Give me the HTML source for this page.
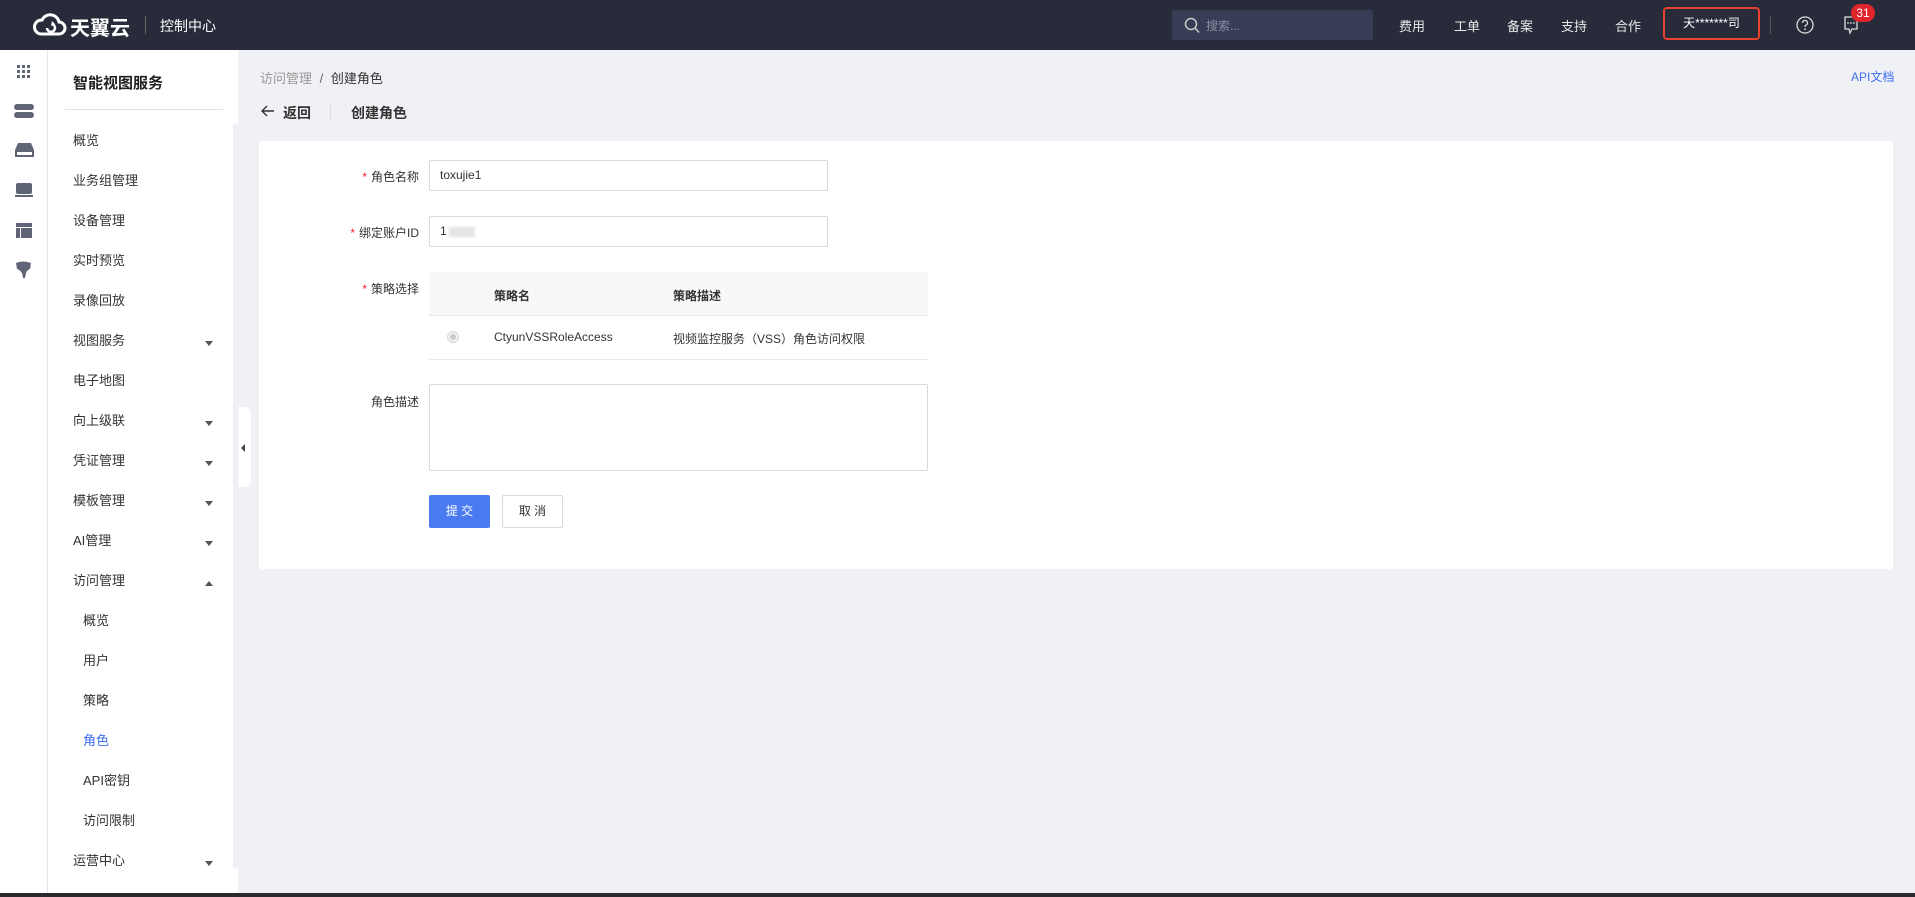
<!DOCTYPE html>
<html><head><meta charset="utf-8">
<style>
*{margin:0;padding:0;box-sizing:border-box}
body{width:1915px;height:897px;overflow:hidden;background:#f0f1f5;font-family:"Liberation Sans","Noto Sans CJK SC",sans-serif;position:relative;color:#333}
.abs{position:absolute}
.top{left:0;top:0;width:1915px;height:50px;background:#282c3a;color:#fff}
.nav{top:16px;font-size:13px;color:#e8e8e8}
.rail{left:0;top:50px;width:48px;height:847px;background:#fff;border-right:1px solid #e4e7ef}
.side{left:48px;top:50px;width:190px;height:847px;background:#fff}
.mi{position:absolute;left:25px;font-size:13px;color:#333;line-height:16px}
.sub{left:35px}
.arr{position:absolute;left:157px;width:0;height:0;border-left:4px solid transparent;border-right:4px solid transparent;border-top:5px solid #555}
.arr.up{border-top:none;border-bottom:5px solid #555}
.lbl{font-size:12px;color:#333;text-align:right;width:120px;left:0}
.lbl b{color:#f5222d;font-weight:normal;margin-right:4px}
.inp{border:1px solid #d9d9d9;border-radius:2px;background:#fff;font-size:12px;color:#333;padding-left:10px}
.ic{fill:#5f6577}
</style></head><body>
<div class="abs top">
  <svg class="abs" style="left:32px;top:13px" width="36" height="24" viewBox="0 0 36 24"><path d="M9 21 H27 a6 6 0 0 0 0-12 a9 9 0 0 0-17-2 a7 7 0 0 0-1 14" fill="none" stroke="#fff" stroke-width="3"/><path d="M15 15 a4 4 0 1 0 5-4" fill="none" stroke="#fff" stroke-width="2.5"/><path d="M20 8 l3 3 -4 2z" fill="#fff"/></svg>
  <div class="abs" style="left:70px;top:12px;font-size:20px;font-weight:bold;color:#fff">天翼云</div>
  <div class="abs" style="left:145px;top:16px;width:1px;height:18px;background:#666"></div>
  <div class="abs" style="left:160px;top:16px;font-size:14px;color:#fff">控制中心</div>
  <div class="abs" style="left:1172px;top:10px;width:201px;height:30px;background:#363d54;border-radius:2px">
    <svg class="abs" style="left:12px;top:7px" width="16" height="17" viewBox="0 0 16 17"><circle cx="7" cy="7" r="5.5" fill="none" stroke="#ccc" stroke-width="1.5"/><path d="M11 11 L15 15.5" stroke="#ccc" stroke-width="1.5"/></svg>
    <span class="abs" style="left:34px;top:7px;font-size:12px;color:#8890a4">搜索...</span>
  </div>
  <div class="abs nav" style="left:1399px">费用</div>
  <div class="abs nav" style="left:1454px">工单</div>
  <div class="abs nav" style="left:1507px">备案</div>
  <div class="abs nav" style="left:1561px">支持</div>
  <div class="abs nav" style="left:1615px">合作</div>
  <div class="abs" style="left:1663px;top:7px;width:97px;height:33px;border:2px solid #e8412c;border-radius:4px;font-size:12px;color:#fff;text-align:center;line-height:29px">天*******司</div>
  <div class="abs" style="left:1770px;top:16px;width:1px;height:18px;background:#555"></div>
  <svg class="abs" style="left:1796px;top:16px" width="18" height="18" viewBox="0 0 18 18"><circle cx="9" cy="9" r="8" fill="none" stroke="#ddd" stroke-width="1.3"/><path d="M6.5 7 a2.5 2.5 0 1 1 3.5 2.2 c-.8.4-1 .9-1 1.8" fill="none" stroke="#ddd" stroke-width="1.3"/><circle cx="9" cy="13.3" r=".9" fill="#ddd"/></svg>
  <svg class="abs" style="left:1844px;top:16px" width="14" height="19" viewBox="0 0 14 19"><path d="M1 1 H13 V13 H8 L6 17 L5 13 H1Z" fill="none" stroke="#ddd" stroke-width="1.3"/><circle cx="4" cy="7" r=".9" fill="#ddd"/><circle cx="7" cy="7" r=".9" fill="#ddd"/><circle cx="10" cy="7" r=".9" fill="#ddd"/></svg>
  <div class="abs" style="left:1851px;top:4px;width:24px;height:18px;border-radius:9px;background:#e0242b;color:#fff;font-size:12px;text-align:center;line-height:18px">31</div>
</div>

<div class="abs rail">
  <svg class="abs" style="left:17px;top:15px" width="14" height="14" viewBox="0 0 14 14"><g class="ic"><rect x="0" y="0" width="3" height="3"/><rect x="5" y="0" width="3" height="3"/><rect x="10" y="0" width="3" height="3"/><rect x="0" y="5" width="3" height="3"/><rect x="5" y="5" width="3" height="3"/><rect x="10" y="5" width="3" height="3"/><rect x="0" y="10" width="3" height="3"/><rect x="5" y="10" width="3" height="3"/><rect x="10" y="10" width="3" height="3"/></g></svg>
  <svg class="abs" style="left:14px;top:54px" width="20" height="15" viewBox="0 0 20 15"><rect class="ic" x="0" y="0" width="20" height="6" rx="3"/><rect class="ic" x="0" y="8" width="20" height="6" rx="3"/></svg>
  <svg class="abs" style="left:15px;top:93px" width="19" height="14" viewBox="0 0 19 14"><path class="ic" d="M3 0 H16 L19 7 V14 H0 V7Z"/><rect x="2" y="9" width="15" height="3" fill="#fff"/></svg>
  <svg class="abs" style="left:15px;top:133px" width="18" height="14" viewBox="0 0 18 14"><rect class="ic" x="1" y="0" width="16" height="11" rx="2"/><rect class="ic" x="0" y="12" width="18" height="2"/></svg>
  <svg class="abs" style="left:16px;top:173px" width="16" height="15" viewBox="0 0 16 15"><rect class="ic" x="0" y="0" width="16" height="4"/><rect class="ic" x="0" y="5" width="4" height="10"/><rect class="ic" x="5" y="5" width="11" height="10"/></svg>
  <svg class="abs" style="left:15px;top:211px" width="17" height="17" viewBox="0 0 17 17"><path class="ic" d="M1 2 Q8 -1 16 2 L15 8 Q12 9 11 12 L10 17 H8 L7 12 Q5 9 2 8Z"/></svg>
</div>

<div class="abs side">
  <div class="abs" style="left:25px;top:22px;font-size:15px;font-weight:bold;color:#222">智能视图服务</div>
  <div class="abs" style="left:17px;top:59px;width:158px;height:1px;background:#e0e2e8"></div>
  <div class="abs" style="left:185px;top:73px;width:6px;height:746px;background:#eef0f4;border-radius:3px"></div>
  <div class="mi" style="top:83px">概览</div>
  <div class="mi" style="top:123px">业务组管理</div>
  <div class="mi" style="top:163px">设备管理</div>
  <div class="mi" style="top:203px">实时预览</div>
  <div class="mi" style="top:243px">录像回放</div>
  <div class="mi" style="top:283px">视图服务</div><div class="arr" style="top:291px"></div>
  <div class="mi" style="top:323px">电子地图</div>
  <div class="mi" style="top:363px">向上级联</div><div class="arr" style="top:371px"></div>
  <div class="mi" style="top:403px">凭证管理</div><div class="arr" style="top:411px"></div>
  <div class="mi" style="top:443px">模板管理</div><div class="arr" style="top:451px"></div>
  <div class="mi" style="top:483px">AI管理</div><div class="arr" style="top:491px"></div>
  <div class="mi" style="top:523px">访问管理</div><div class="arr up" style="top:531px"></div>
  <div class="mi sub" style="top:563px">概览</div>
  <div class="mi sub" style="top:603px">用户</div>
  <div class="mi sub" style="top:643px">策略</div>
  <div class="mi sub" style="top:683px;color:#3d6df2">角色</div>
  <div class="mi sub" style="top:723px">API密钥</div>
  <div class="mi sub" style="top:763px">访问限制</div>
  <div class="mi" style="top:803px">运营中心</div><div class="arr" style="top:811px"></div>
</div>
<div class="abs" style="left:238px;top:407px;width:13px;height:80px;background:#fff;border-radius:0 6px 6px 0"></div>
<div class="abs" style="left:241px;top:444px;width:0;height:0;border-top:4px solid transparent;border-bottom:4px solid transparent;border-right:4px solid #444"></div>

<div class="abs" style="left:260px;top:68px;font-size:13px;color:#999">访问管理 <span style="color:#666;margin:0 4px">/</span> <span style="color:#333">创建角色</span></div>
<div class="abs" style="left:1851px;top:68px;font-size:12px;color:#3d6df2">API文档</div>
<svg class="abs" style="left:261px;top:105px" width="14" height="12" viewBox="0 0 14 12"><path d="M13 6 H2 M6 1 L1 6 L6 11" fill="none" stroke="#333" stroke-width="1.4"/></svg>
<div class="abs" style="left:283px;top:103px;font-size:14px;font-weight:bold;color:#333">返回</div>
<div class="abs" style="left:330px;top:104px;width:1px;height:16px;background:#ddd"></div>
<div class="abs" style="left:351px;top:103px;font-size:14px;font-weight:bold;color:#333">创建角色</div>

<div class="abs" style="left:259px;top:141px;width:1634px;height:428px;background:#fff;border-radius:3px">
  <div class="abs lbl" style="top:27px;left:0;width:160px"><b>*</b>角色名称</div>
  <div class="abs inp" style="left:170px;top:19px;width:399px;height:31px;line-height:29px">toxujie1</div>
  <div class="abs lbl" style="top:83px;left:0;width:160px"><b>*</b>绑定账户ID</div>
  <div class="abs inp" style="left:170px;top:75px;width:399px;height:31px;line-height:29px">1<span style="display:inline-block;width:26px;height:10px;background:#e6e6e6;vertical-align:middle;margin-left:2px;filter:blur(1px)"></span></div>
  <div class="abs lbl" style="top:139px;left:0;width:160px"><b>*</b>策略选择</div>
  <div class="abs" style="left:170px;top:131px;width:499px;height:44px;background:#f7f8fa;border-bottom:1px solid #e8e8e8"></div>
  <div class="abs" style="left:235px;top:146px;font-size:12px;font-weight:bold">策略名</div>
  <div class="abs" style="left:414px;top:146px;font-size:12px;font-weight:bold">策略描述</div>
  <div class="abs" style="left:170px;top:175px;width:499px;height:44px;border-bottom:1px solid #e8e8e8"></div>
  <div class="abs" style="left:188px;top:190px;width:12px;height:12px;border-radius:50%;border:1px solid #d9d9d9;background:#f2f2f2"><div style="margin:2px;width:6px;height:6px;border-radius:50%;background:#ccc"></div></div>
  <div class="abs" style="left:235px;top:189px;font-size:12px">CtyunVSSRoleAccess</div>
  <div class="abs" style="left:414px;top:189px;font-size:12px">视频监控服务（VSS）角色访问权限</div>
  <div class="abs lbl" style="top:252px;left:0;width:160px">角色描述</div>
  <div class="abs inp" style="left:170px;top:243px;width:499px;height:87px"></div>
  <div class="abs" style="left:170px;top:354px;width:61px;height:33px;background:#4a7af0;border-radius:2px;color:#fff;font-size:12px;text-align:center;line-height:33px">提 交</div>
  <div class="abs" style="left:243px;top:354px;width:61px;height:33px;border:1px solid #d9d9d9;border-radius:2px;color:#333;font-size:12px;text-align:center;line-height:31px">取 消</div>
</div>
<div class="abs" style="left:0;top:893px;width:1915px;height:4px;background:#2a2a2e"></div>
</body></html>
